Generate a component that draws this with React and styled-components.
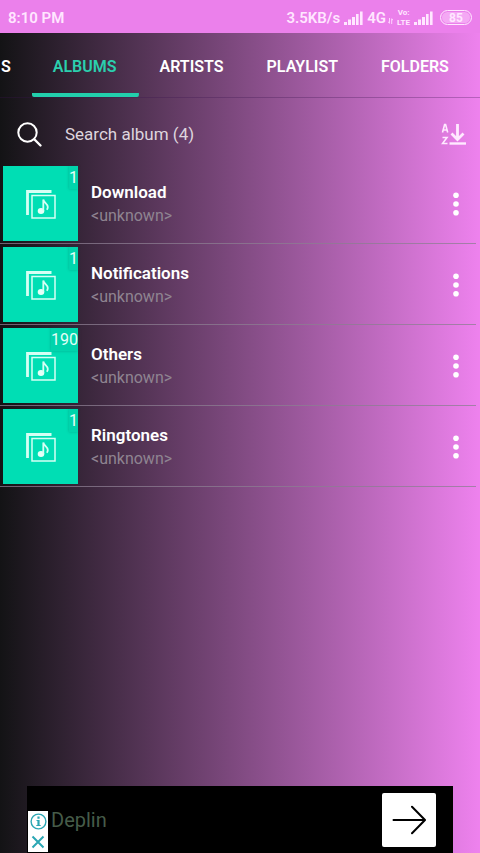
import React from "react";
import styled, { createGlobalStyle } from "styled-components";

const ACCENT = "#00deb4";
const PINK = "#ee82ee";

const GlobalStyle = createGlobalStyle`
  * { box-sizing: border-box; }
  body { margin: 0; font-family: Roboto, "Noto Sans", sans-serif; }
  button, input { font-family: inherit; border: 0; background: none; padding: 0; }
  button { cursor: pointer; }
`;

const Screen = styled.div`
  min-height: 100vh;
  display: flex;
  flex-direction: column;
  overflow: hidden;
  color: #fff;
  background: linear-gradient(to right, #131315, ${PINK});
`;

const StatusBar = styled.header`
  height: 33px;
  display: flex;
  align-items: center;
  justify-content: space-between;
  padding: 2px 8px 0;
  background: #eb80eb;
  color: #ffe6ff;
  font-size: 15px;
  font-weight: 600;
`;

const StatusGroup = styled.div`
  display: flex;
  align-items: center;
  gap: 4px;
`;

const VoLte = styled.span`
  display: flex;
  flex-direction: column;
  align-items: center;
  font-size: 8px;
  line-height: 10px;
  font-weight: 700;
`;

const Battery = styled.span`
  width: 32px;
  height: 15px;
  margin-left: 3px;
  display: flex;
  align-items: center;
  justify-content: center;
  border: 1px solid #ffe6ff;
  border-radius: 8px;
  font-size: 12px;
  font-weight: 700;
  box-shadow: inset 0 0 0 1px #eb80eb, inset 0 0 0 8px #f4a8f4;
`;

const Network = styled.span`
  display: flex;
  align-items: flex-end;
`;

const ArrowSlot = styled.span`
  display: flex;
  padding: 0 0 3px 2px;
`;

const Tabs = styled.nav`
  height: 65px;
  display: flex;
  overflow: hidden;
  border-bottom: 1px solid rgba(60, 20, 80, 0.3);
`;

const Tab = styled.button`
  flex: none;
  padding: ${(p) => (p.$clipped ? "6px 21px 0 1px" : "6px 22px 0 21px")};
  font-size: 16px;
  font-weight: 600;
  color: ${(p) => (p.$active ? "#2bcfae" : "#fff")};
  border-bottom: 4px solid transparent;
  background: ${(p) =>
    p.$active
      ? "linear-gradient(#22cfac, #22cfac) bottom / 100% 4px no-repeat border-box"
      : "none"};
  border-radius: 2px;
`;

const SearchRow = styled.label`
  height: 65px;
  display: flex;
  align-items: center;
  padding: 7px 14px 0 16px;
`;

const SearchInput = styled.input`
  flex: 1;
  min-width: 0;
  margin-left: 22px;
  height: 28px;
  font-size: 17px;
  color: #ded5de;
  outline: none;
  &::placeholder { color: #ded5de; opacity: 1; }
`;

const SortButton = styled.button`
  display: flex;
`;

const AlbumList = styled.ul`
  flex: 1;
  list-style: none;
  margin: 0;
  padding: 0 4px 0 0;
`;

const AlbumRow = styled.li`
  display: flex;
  align-items: center;
  padding: 3px 14px 2px 3px;
  border-bottom: 1px solid rgba(140, 125, 145, 0.75);
`;

const Cover = styled.div`
  position: relative;
  flex: none;
  width: 75px;
  height: 75px;
  display: flex;
  align-items: center;
  justify-content: center;
  background: ${ACCENT};
`;

const Count = styled.span`
  position: absolute;
  top: 0;
  right: 0;
  height: 23px;
  line-height: 24px;
  font-size: 16px;
  color: #e4fff8;
  background: rgba(0, 190, 155, 0.3);
  box-shadow: 0 0 3px rgba(0, 90, 80, 0.35);
`;

const AlbumText = styled.div`
  flex: 1;
  min-width: 0;
  margin-left: 13px;
`;

const AlbumName = styled.div`
  font-size: 17px;
  line-height: 23px;
  font-weight: 600;
`;

const Artist = styled.div`
  font-size: 16px;
  line-height: 23px;
  color: #8f8491;
`;

const MoreButton = styled.button`
  display: flex;
  justify-content: center;
  width: 13px;
`;

const AdBanner = styled.aside`
  position: relative;
  height: 67px;
  margin: 0 27px;
  padding: 0 17px 0 24px;
  display: flex;
  align-items: center;
  justify-content: space-between;
  background: #000;
`;

const AdTitle = styled.span`
  font-size: 20px;
  color: #465c49;
`;

const AdOpen = styled.button`
  width: 54px;
  height: 54px;
  display: flex;
  align-items: center;
  justify-content: center;
  background: #fff;
  border-radius: 2px;
`;

const AdControls = styled.div`
  position: absolute;
  left: 1px;
  bottom: 1px;
  width: 20px;
  height: 41px;
  display: flex;
  flex-direction: column;
  background: #fff;
`;

const AdControl = styled.button`
  flex: 1;
  display: flex;
  align-items: center;
  justify-content: center;
`;

const SignalIcon = () => (
  <svg width="19" height="14" viewBox="0 0 19 14" fill="#ffe6ff" aria-hidden="true">
    <rect x="0" y="11" width="3" height="3" />
    <rect x="4" y="8.5" width="3" height="5.5" />
    <rect x="8" y="6" width="3" height="8" />
    <rect x="12" y="3" width="2.6" height="11" />
    <rect x="16" y="0.5" width="2.6" height="13.5" />
  </svg>
);

const DataArrows = () => (
  <svg width="5" height="6" viewBox="0 0 5 6" fill="none" stroke="#ffd0ff" aria-hidden="true">
    <path d="M1.5 0v5M0 3.5l1.5 2M3.7 6V1M5 2.5L3.7 0.5" />
  </svg>
);

const SearchIcon = () => (
  <svg width="27" height="27" viewBox="0 0 27 27" fill="none" stroke="#fff" strokeWidth="2" strokeLinecap="round" aria-hidden="true">
    <circle cx="11.5" cy="11.5" r="9.2" />
    <path d="M18.5 18.5L24.5 24.5" strokeWidth="2.4" />
  </svg>
);

const SortIcon = () => (
  <svg width="25" height="23" viewBox="0 0 25 23" fill="none" stroke="#ffe9ff" strokeWidth="1.6" aria-hidden="true">
    <path d="M1.5 9.5L3.6 1.5h1L6.7 9.5M2.3 7h3.6" />
    <path d="M1.5 14.5H6L1.5 20.5H6.5" />
    <path d="M16.5 1v15M10.5 10.5l6 6 6-6" strokeWidth="2.8" />
    <path d="M8.5 20.5H25" strokeWidth="2.4" />
  </svg>
);

const AlbumIcon = () => (
  <svg width="30" height="30" viewBox="0 0 30 30" fill="none" stroke="#d5fff4" aria-hidden="true">
    <path d="M1.5 26V2.5H25.5" strokeWidth="2.8" />
    <rect x="6" y="6.5" width="23" height="22.5" strokeWidth="1.5" />
    <ellipse cx="15" cy="22" rx="3.3" ry="3" fill="#e4fff8" stroke="none" />
    <path d="M17.3 22V10.5c.5 3.5 4.500 4 4.500 7.500 0 1.200-.4 2-1 2.800" strokeWidth="1.8" />
  </svg>
);

const MoreIcon = () => (
  <svg width="6" height="24" viewBox="0 0 6 24" fill="#fff" aria-hidden="true">
    <circle cx="3" cy="3.3" r="2.8" />
    <circle cx="3" cy="12" r="2.8" />
    <circle cx="3" cy="20.7" r="2.8" />
  </svg>
);

const ArrowIcon = () => (
  <svg width="34" height="30" viewBox="0 0 34 30" fill="none" stroke="#000" strokeWidth="2" strokeLinecap="round" strokeLinejoin="round" aria-hidden="true">
    <path d="M1.5 15H32M20 1.8L33 15 20 28.2" />
  </svg>
);

const InfoIcon = () => (
  <svg width="17" height="17" viewBox="0 0 17 17" fill="none" stroke="#2ba7b4" aria-hidden="true">
    <circle cx="8.5" cy="8.5" r="7.4" strokeWidth="1.4" />
    <path d="M8.5 3.5v2.2M8.5 7v5.5" strokeWidth="2.2" />
    <path d="M6.5 7.5h2M6.3 12.5h4.4" strokeWidth="1.2" />
  </svg>
);

const CloseIcon = () => (
  <svg width="14" height="14" viewBox="0 0 14 14" fill="none" stroke="#2ba7b4" strokeWidth="2" aria-hidden="true">
    <path d="M1.5 1.5l11 11M12.5 1.5l-11 11" />
  </svg>
);

const tabs = ["S", "ALBUMS", "ARTISTS", "PLAYLIST", "FOLDERS"];

const albums = [
  { name: "Download", count: 1 },
  { name: "Notifications", count: 1 },
  { name: "Others", count: 190 },
  { name: "Ringtones", count: 1 },
];

export default function App() {
  return (
    <Screen>
      <GlobalStyle />
      <StatusBar>
        <span>8:10 PM</span>
        <StatusGroup>
          <span>3.5KB/s</span>
          <SignalIcon />
          <Network>4G<ArrowSlot><DataArrows /></ArrowSlot></Network>
          <VoLte><span>Vo:</span><span>LTE</span></VoLte>
          <SignalIcon />
          <Battery>85</Battery>
        </StatusGroup>
      </StatusBar>
      <Tabs>
        {tabs.map((t, i) => (
          <Tab key={t} $active={t === "ALBUMS"} $clipped={i === 0}>{t}</Tab>
        ))}
      </Tabs>
      <SearchRow>
        <SearchIcon />
        <SearchInput type="text" aria-label="Search album" placeholder="Search album (4)" />
        <SortButton aria-label="Sort A to Z"><SortIcon /></SortButton>
      </SearchRow>
      <AlbumList>
        {albums.map((a) => (
          <AlbumRow key={a.name}>
            <Cover>
              <AlbumIcon />
              <Count>{a.count}</Count>
            </Cover>
            <AlbumText>
              <AlbumName>{a.name}</AlbumName>
              <Artist>&lt;unknown&gt;</Artist>
            </AlbumText>
            <MoreButton aria-label={`Options for ${a.name}`}><MoreIcon /></MoreButton>
          </AlbumRow>
        ))}
      </AlbumList>
      <AdBanner>
        <AdTitle>Deplin</AdTitle>
        <AdOpen aria-label="Open ad"><ArrowIcon /></AdOpen>
        <AdControls>
          <AdControl aria-label="Ad information"><InfoIcon /></AdControl>
          <AdControl aria-label="Close ad"><CloseIcon /></AdControl>
        </AdControls>
      </AdBanner>
    </Screen>
  );
}
